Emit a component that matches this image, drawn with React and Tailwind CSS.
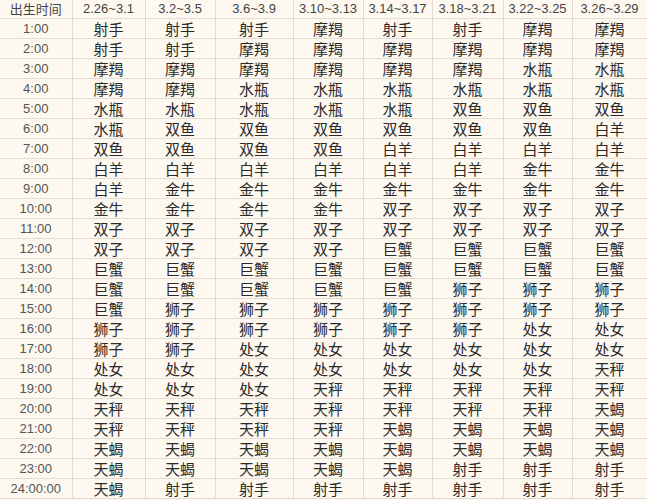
const header = ['出生时间', '2.26~3.1', '3.2~3.5', '3.6~3.9', '3.10~3.13', '3.14~3.17', '3.18~3.21', '3.22~3.25', '3.26~3.29'];

const widths = ['w-[72px]', 'w-[73px]', 'w-[70px]', 'w-[78px]', 'w-[70px]', 'w-[69px]', 'w-[71px]', 'w-[69px]', 'w-[75px]'];

const rows = [
  ['1:00', '射手 射手 射手 摩羯 射手 射手 摩羯 摩羯'],
  ['2:00', '射手 射手 摩羯 摩羯 摩羯 摩羯 摩羯 摩羯'],
  ['3:00', '摩羯 摩羯 摩羯 摩羯 摩羯 摩羯 水瓶 水瓶'],
  ['4:00', '摩羯 摩羯 水瓶 水瓶 水瓶 水瓶 水瓶 水瓶'],
  ['5:00', '水瓶 水瓶 水瓶 水瓶 水瓶 双鱼 双鱼 双鱼'],
  ['6:00', '水瓶 双鱼 双鱼 双鱼 双鱼 双鱼 双鱼 白羊'],
  ['7:00', '双鱼 双鱼 双鱼 双鱼 白羊 白羊 白羊 白羊'],
  ['8:00', '白羊 白羊 白羊 白羊 白羊 白羊 金牛 金牛'],
  ['9:00', '白羊 金牛 金牛 金牛 金牛 金牛 金牛 金牛'],
  ['10:00', '金牛 金牛 金牛 金牛 双子 双子 双子 双子'],
  ['11:00', '双子 双子 双子 双子 双子 双子 双子 双子'],
  ['12:00', '双子 双子 双子 双子 巨蟹 巨蟹 巨蟹 巨蟹'],
  ['13:00', '巨蟹 巨蟹 巨蟹 巨蟹 巨蟹 巨蟹 巨蟹 巨蟹'],
  ['14:00', '巨蟹 巨蟹 巨蟹 巨蟹 巨蟹 狮子 狮子 狮子'],
  ['15:00', '巨蟹 狮子 狮子 狮子 狮子 狮子 狮子 狮子'],
  ['16:00', '狮子 狮子 狮子 狮子 狮子 狮子 处女 处女'],
  ['17:00', '狮子 狮子 处女 处女 处女 处女 处女 处女'],
  ['18:00', '处女 处女 处女 处女 处女 处女 处女 天秤'],
  ['19:00', '处女 处女 处女 天秤 天秤 天秤 天秤 天秤'],
  ['20:00', '天秤 天秤 天秤 天秤 天秤 天秤 天秤 天蝎'],
  ['21:00', '天秤 天秤 天秤 天秤 天蝎 天蝎 天蝎 天蝎'],
  ['22:00', '天蝎 天蝎 天蝎 天蝎 天蝎 天蝎 天蝎 天蝎'],
  ['23:00', '天蝎 天蝎 天蝎 天蝎 天蝎 射手 射手 射手'],
  ['24:00:00', '天蝎 射手 射手 射手 射手 射手 射手 射手'],
];

const cell = 'p-0 border-b border-r border-[#e4dbd2] text-center align-middle';
const cjk = "font-['Noto_Sans_CJK_SC',sans-serif]";
const latin = "font-['Liberation_Sans',Arial,sans-serif]";

export default function App() {
  return (
    <div className="w-[647px] h-[500px] overflow-hidden bg-[#fdf9f1]">
      <table className="w-[647px] table-fixed border-collapse">
        <thead>
          <tr>
            {header.map((h, i) => (
              <th key={h} className={`${widths[i]} ${cell} font-normal text-[#444]`}>
                <div className={`h-[18px] overflow-hidden leading-[18px] text-[13px] ${i === 0 ? cjk : latin}`}>
                  {h}
                </div>
              </th>
            ))}
          </tr>
        </thead>
        <tbody>
          {rows.map(([time, signs]) => (
            <tr key={time}>
              <td className={`${cell} text-[#555]`}>
                <div className={`h-[19px] overflow-hidden leading-[19px] text-[13px] ${latin}`}>{time}</div>
              </td>
              {signs.split(' ').map((s, j) => (
                <td key={j} className={`${cell} text-[#2a2a2a]`}>
                  <div className={`h-[19px] overflow-hidden leading-[19px] text-[15px] ${cjk}`}>{s}</div>
                </td>
              ))}
            </tr>
          ))}
        </tbody>
      </table>
    </div>
  );
}
